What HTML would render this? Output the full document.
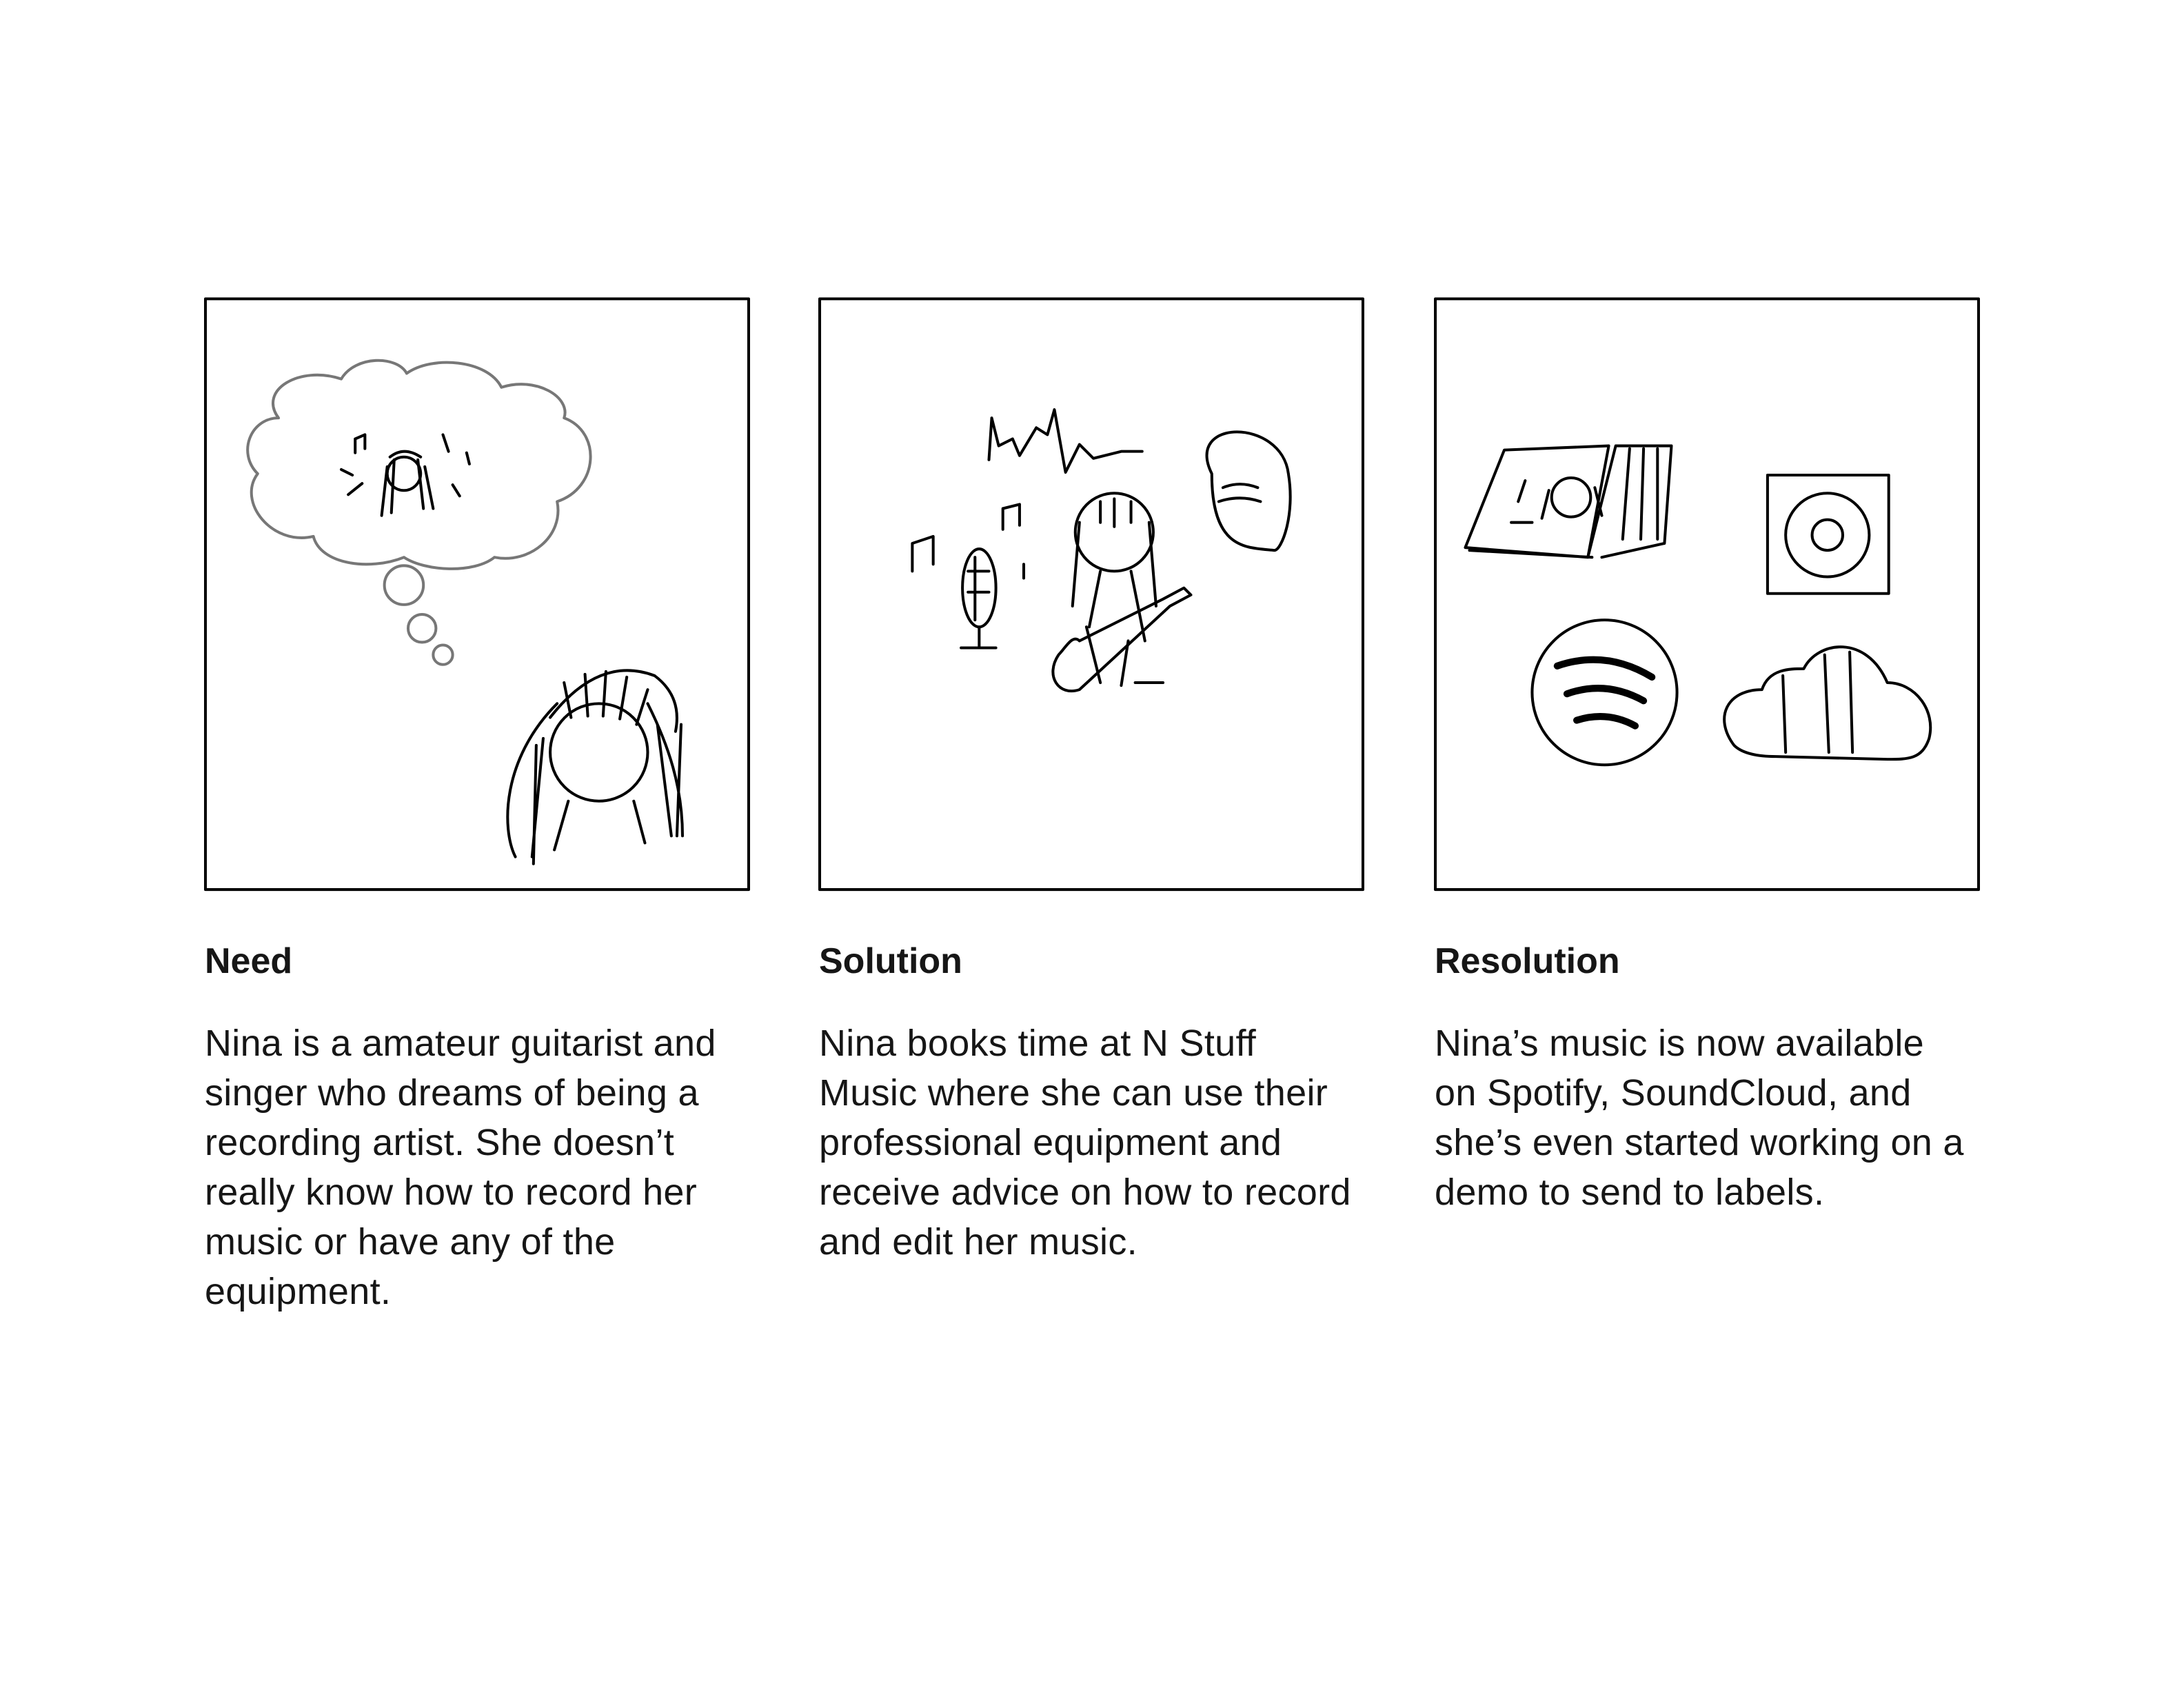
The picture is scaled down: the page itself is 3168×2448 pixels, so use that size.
<!DOCTYPE html>
<html><head><meta charset="utf-8"><style>
html,body{margin:0;padding:0;background:#fff;}
body{width:3168px;height:2448px;position:relative;overflow:hidden;font-family:"Liberation Sans",sans-serif;color:#161616;}
svg{position:absolute;left:0;top:0;}
.col{position:absolute;width:900px;}
h2{margin:0;font-size:52px;line-height:72px;font-weight:bold;position:absolute;top:1358px;}
p{margin:0;font-size:54px;line-height:72px;font-weight:normal;position:absolute;top:1477px;width:900px;white-space:nowrap;letter-spacing:0.3px;}
</style></head><body>
<svg width="3168" height="2448" viewBox="0 0 1568 1211.6" fill="none" stroke="#000" stroke-width="2" stroke-linecap="round" stroke-linejoin="round">
<rect x="147.5" y="214.5" width="390" height="424" stroke-width="2"/>
<rect x="588.5" y="214.5" width="390" height="424" stroke-width="2"/>
<rect x="1030.5" y="214.5" width="390" height="424" stroke-width="2"/>
<g stroke="#777" stroke-width="2">
<path d="M200 300 C185 280 215 262 245 272 C255 255 285 255 292 268 C310 255 350 258 360 278 C385 270 410 285 405 300 C432 310 430 350 400 360 C405 385 380 405 355 400 C340 412 305 410 290 400 C265 410 230 405 225 385 C195 392 170 360 185 340 C170 325 180 300 200 300 Z"/>
<circle cx="290" cy="420" r="14"/><circle cx="303" cy="451" r="10"/><circle cx="318" cy="470" r="7"/>
</g>
<circle cx="290" cy="340" r="12"/>
<path d="M278 335 l-4 35 M283 330 l-2 38 M300 330 l4 35 M305 335 l6 30 M280 328 q10 -8 22 0"/>
<path d="M255 315 l0 10 M262 312 l0 10 M255 315 l7 -3 M318 312 l4 12 M335 325 l2 8 M245 337 l8 4 M250 355 l10 -8 M325 348 l5 8"/>
<circle cx="430" cy="540" r="35"/>
<path d="M395 515 q35 -45 75 -30 q20 15 15 40 M400 505 c-40 40 -40 90 -30 110 M390 530 l-8 85 M465 505 c15 30 25 60 25 95 M472 520 l10 80 M398 610 l10 -35 M455 575 l8 30 M383 620 l2 -85 M486 600 l3 -80 M405 490 l5 25 M420 484 l2 30 M435 482 l-2 32 M450 486 l-5 30 M465 495 l-8 25"/>
<path d="M710 330 l2 -30 l5 20 l10 -5 l5 12 l12 -20 l8 5 l5 -18 l8 45 l10 -20 l10 10 l20 -5 l15 0"/>
<path d="M870 340 c-20 -40 50 -40 55 0 c5 30 -5 55 -10 55 c-20 -2 -45 0 -45 -55 Z M875 360 q15 -5 30 0 M878 350 q12 -5 25 0"/>
<circle cx="800" cy="382" r="28"/>
<path d="M775 375 l-5 60 M790 360 l0 15 M800 358 l0 20 M812 360 l0 15 M825 375 l5 60 M790 410 l-8 40 M812 410 l10 50 M780 450 l10 40 M810 460 l-5 32 M815 490 l20 0"/>
<path d="M760 470 c-10 15 0 30 15 25 l65 -60 l15 -8 l-5 -5 l-15 8 l-60 30 c-5 -5 -10 5 -15 10 Z"/>
<ellipse cx="703" cy="422" rx="12" ry="28"/>
<path d="M703 450 l0 15 M690 465 l25 0 M700 400 l0 45 M695 410 l15 0 M695 425 l15 0"/>
<path d="M655 410 l0 -20 l15 -5 l0 20 M720 380 l0 -15 l12 -3 l0 15 M735 415 l0 -10"/>
<path d="M1052 393 l28 -70 l75 -3 l-15 80 Z M1055 395 l88 5 M1140 400 l20 -80 l40 0 l-5 70 l-45 10"/>
<path d="M1170 322 l-5 65 M1180 322 l-2 65 M1190 322 l0 65"/>
<circle cx="1128" cy="357" r="14"/><path d="M1112 352 l-5 20 M1145 350 l5 20 M1095 345 l-5 15 M1085 375 l15 0"/>
<rect x="1269" y="341" width="87" height="85"/>
<circle cx="1312" cy="384" r="30"/><circle cx="1312" cy="384" r="11"/>
<circle cx="1152" cy="497" r="52"/>
<path d="M1118 478 q35 -12 68 8 M1125 498 q28 -10 55 5 M1132 517 q22 -7 42 4" stroke-width="5"/>
<path d="M1245 535 c-15 -20 -5 -40 20 -40 c5 -15 20 -15 30 -15 c10 -20 45 -25 60 10 c20 0 35 20 30 40 c-5 15 -15 15 -30 15 l-80 -2 c-15 0 -25 -3 -30 -8 Z M1280 485 l2 55 M1310 470 l3 70 M1328 468 l2 72"/>
</svg>
<div class="col" style="left:297px"><h2>Need</h2><p>Nina is a amateur guitarist and<br>singer who dreams of being a<br>recording artist. She doesn’t<br>really know how to record her<br>music or have any of the<br>equipment.</p></div>
<div class="col" style="left:1188px"><h2>Solution</h2><p>Nina books time at N Stuff<br>Music where she can use their<br>professional equipment and<br>receive advice on how to record<br>and edit her music.</p></div>
<div class="col" style="left:2081px"><h2>Resolution</h2><p>Nina’s music is now available<br>on Spotify, SoundCloud, and<br>she’s even started working on a<br>demo to send to labels.</p></div>
</body></html>
